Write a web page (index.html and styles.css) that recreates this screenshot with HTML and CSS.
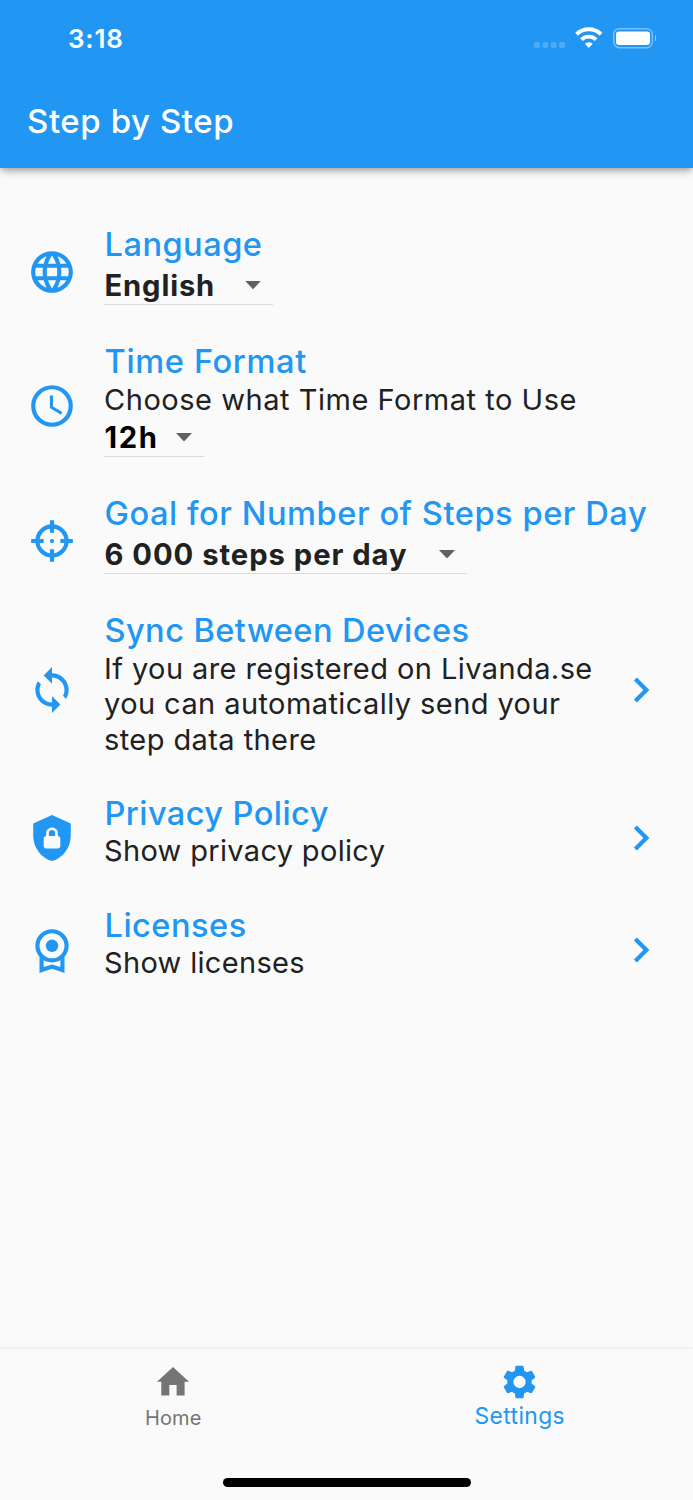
FILE: index.html
```html
<!DOCTYPE html>
<html lang="en">
<head>
<meta charset="utf-8">
<title>Step by Step</title>
<link rel="stylesheet" href="styles.css">
</head>
<body>
<div class="screen">
  <header class="header">
    <div class="status">
      <span class="time">3:18</span>
      <svg class="status-icons" viewBox="0 0 126 24">
        <g fill="#fff" opacity=".2">
          <rect x="4" y="16" width="6" height="6" rx="1.8"/><rect x="12.400" y="16" width="6" height="6" rx="1.8"/><rect x="20.700" y="16" width="6" height="6" rx="1.8"/><rect x="29" y="16" width="6" height="6" rx="1.8"/>
        </g>
        <g fill="none" stroke="#fff">
          <path d="M46.600 8.300a17.500 17.500 0 0 1 24.400 0" stroke-width="4"/>
          <path d="M51.500 13.600a10.600 10.600 0 0 1 14.600 0" stroke-width="3.800"/>
        </g>
        <path d="M58.800 22.100l-3.900-4.300a5.600 5.600 0 0 1 7.800 0z" fill="#fff"/>
        <rect x="83.700" y="2.700" width="38.600" height="19" rx="5.600" fill="none" stroke="#fff" stroke-opacity=".4" stroke-width="1.500"/>
        <rect x="86" y="5.400" width="34" height="13.700" rx="3" fill="#fff"/>
        <path d="M125 9.100c2.400 1 2.400 5.200 0 6.200z" fill="#fff" opacity=".5"/>
      </svg>
    </div>
    <h1 class="app-title">Step by Step</h1>
  </header>

  <main class="list">
    <section class="row">
      <svg class="icon" viewBox="0 0 24 24"><path d="M11.990 2C6.470 2 2 6.480 2 12s4.470 10 9.990 10C17.520 22 22 17.520 22 12S17.520 2 11.990 2zm6.930 6h-2.950c-.32-1.250-.78-2.450-1.380-3.560 1.840.63 3.370 1.910 4.330 3.560zM12 4.040c.83 1.200 1.480 2.530 1.910 3.960h-3.820c.43-1.430 1.080-2.760 1.910-3.960zM4.260 14C4.100 13.360 4 12.690 4 12s.1-1.360.26-2h3.380c-.08.66-.14 1.320-.14 2s.06 1.340.14 2H4.260zm.82 2h2.950c.32 1.250.78 2.450 1.380 3.560-1.840-.63-3.370-1.900-4.330-3.560zm2.950-8H5.080c.96-1.660 2.490-2.930 4.330-3.560C8.810 5.550 8.350 6.750 8.030 8zM12 19.960c-.83-1.200-1.480-2.530-1.910-3.960h3.820c-.43 1.430-1.080 2.760-1.910 3.960zM14.340 14H9.660c-.09-.66-.16-1.320-.16-2s.07-1.350.16-2h4.680c.09.65.16 1.320.16 2s-.07 1.340-.16 2zm.25 5.560c.6-1.110 1.060-2.310 1.380-3.560h2.950c-.96 1.650-2.490 2.930-4.330 3.560zM16.360 14c.08-.66.14-1.320.14-2s-.06-1.340-.14-2h3.380c.16.64.26 1.310.26 2s-.1 1.360-.26 2h-3.380z"/></svg>
      <div class="content">
        <h2 class="label">Language</h2>
        <div class="select select-language"><span>English</span><i class="caret"></i></div>
      </div>
    </section>

    <section class="row">
      <svg class="icon" viewBox="0 0 24 24"><circle cx="12" cy="12" r="9" fill="none" stroke="currentColor" stroke-width="2"/><path d="M12.500 7v5.250l4.500 2.670-.75 1.230L11 13V7h1.500z"/></svg>
      <div class="content">
        <h2 class="label time-format">Time Format</h2>
        <p class="text choose">Choose what Time Format to Use</p>
        <div class="select select-time"><span>12h</span><i class="caret"></i></div>
      </div>
    </section>

    <section class="row">
      <svg class="icon" viewBox="0 0 24 24"><g fill="none" stroke="currentColor" stroke-width="2"><circle cx="12" cy="12" r="7"/><path d="M12 2v6M12 16v6M2 12h6M16 12h6"/></g><circle cx="12" cy="12" r="1"/></svg>
      <div class="content">
        <h2 class="label goal">Goal for Number of Steps per Day</h2>
        <div class="select select-goal"><span>6 000 steps per day</span><i class="caret"></i></div>
      </div>
    </section>

    <section class="row">
      <svg class="icon" viewBox="0 0 24 24"><path d="M12 4V1L8 5l4 4V6c3.310 0 6 2.690 6 6 0 1.010-.25 1.970-.7 2.800l1.460 1.460C19.540 15.030 20 13.570 20 12c0-4.420-3.580-8-8-8zm0 14c-3.310 0-6-2.690-6-6 0-1.010.25-1.970.7-2.800L5.240 7.740C4.460 8.970 4 10.430 4 12c0 4.420 3.580 8 8 8v3l4-4-4-4v3z"/></svg>
      <div class="content">
        <h2 class="label sync">Sync Between Devices</h2>
        <p class="text registered">If you are registered on Livanda.se<br>you can automatically send your<br>step data there</p>
      </div>
      <svg class="icon" viewBox="0 0 24 24"><path d="M10 6L8.590 7.410 13.170 12l-4.580 4.590L10 18l6-6z"/></svg>
    </section>

    <section class="row">
      <svg class="icon" viewBox="0 0 24 24"><path d="M12 1L3 5v6c0 5.550 3.840 10.740 9 12 5.160-1.260 9-6.450 9-12V5zM12 7c1.400 0 2.800 1.100 2.800 2.500V11c.6 0 1.200.6 1.200 1.300v3.500c0 .6-.6 1.200-1.300 1.200H9.200C8.600 17 8 16.400 8 15.700v-3.500c0-.6.6-1.200 1.200-1.200V9.500C9.200 8.100 10.600 7 12 7m0 1.200c-.8 0-1.500.5-1.500 1.300V11h3V9.500c0-.8-.7-1.300-1.500-1.300z" fill-rule="evenodd"/></svg>
      <div class="content">
        <h2 class="label privacy">Privacy Policy</h2>
        <p class="text">Show privacy policy</p>
      </div>
      <svg class="icon" viewBox="0 0 24 24"><path d="M10 6L8.590 7.410 13.170 12l-4.580 4.590L10 18l6-6z"/></svg>
    </section>

    <section class="row">
      <svg class="icon" viewBox="0 0 24 24"><circle cx="12" cy="10" r="7" fill="none" stroke="currentColor" stroke-width="2"/><circle cx="12" cy="10" r="3"/><path d="M6 15v8l6-2 6 2v-8l-2 1.900v3.300L12 19l-4 1.200v-3.300z"/></svg>
      <div class="content">
        <h2 class="label">Licenses</h2>
        <p class="text">Show licenses</p>
      </div>
      <svg class="icon" viewBox="0 0 24 24"><path d="M10 6L8.590 7.410 13.170 12l-4.580 4.590L10 18l6-6z"/></svg>
    </section>
  </main>

  <nav class="tabs">
    <div class="tab-list">
      <a class="tab">
        <svg class="tab-icon" viewBox="0 0 40 40"><path d="M20 5L4 19.800h4.300v13.800h8V23h7.300v10.600h8V19.800H36z"/></svg>
        <span>Home</span>
      </a>
      <a class="tab active">
        <svg class="tab-icon" viewBox="0 0 24 24"><path fill-rule="evenodd" d="M19.430 12.980c.04-.32.07-.64.07-.98s-.03-.66-.07-.98l2.110-1.650c.19-.15.24-.42.12-.64l-2-3.460c-.12-.22-.39-.3-.61-.22l-2.490 1c-.52-.4-1.080-.73-1.690-.98l-.38-2.650C14.460 2.180 14.250 2 14 2h-4c-.25 0-.46.18-.49.42l-.38 2.650c-.61.25-1.170.59-1.690.98l-2.490-1c-.23-.09-.49 0-.61.22l-2 3.460c-.13.22-.07.49.12.64l2.110 1.650c-.04.32-.07.65-.07.98s.03.66.07.98l-2.110 1.650c-.19.15-.24.42-.12.64l2 3.460c.12.22.39.3.61.22l2.490-1c.52.4 1.080.73 1.690.98l.38 2.650c.03.24.24.42.49.42h4c.25 0 .46-.18.49-.42l.38-2.650c.61-.25 1.170-.59 1.690-.98l2.490 1c.23.09.49 0 .61-.22l2-3.460c.12-.22.07-.49-.12-.64l-2.110-1.650zM12 15.800a3.800 3.800 0 1 1 0-7.600 3.800 3.800 0 0 1 0 7.600z"/></svg>
        <span>Settings</span>
      </a>
    </div>
    <div class="home-indicator"></div>
  </nav>
</div>
</body>
</html>
```
FILE: styles.css
```css
* { box-sizing: border-box; }
body { margin: 0; font-family: Inter, "Liberation Sans", sans-serif; background: #fafafa; color: #212121; }
h1, h2, p { margin: 0; font-weight: 400; }
svg { display: block; fill: currentColor; flex: none; }

.screen { width: 693px; height: 1500px; display: flex; flex-direction: column; overflow: hidden; }

.header { height: 167.500px; flex: none; background: #2196f3; color: #fff; box-shadow: 0 4px 8px -1px rgba(0,0,0,.32), 0 1px 4px rgba(0,0,0,.1); }
.status { height: 76px; display: flex; align-items: center; justify-content: space-between; padding: 0 37px 0 68px; }
.time { font-size: 26px; font-weight: 600; letter-spacing: .8px; }
.status-icons { width: 126px; height: 24px; }
.app-title { padding-left: 27px; font-size: 33px; font-weight: 500; line-height: 90px; letter-spacing: .57px; }

.list { flex: 1; padding-top: 45.700px; }
.row { display: flex; align-items: center; padding: 0 27px; }
.icon { width: 50px; height: 50px; color: #2196f3; }
.content { flex: 1; margin-left: 27px; padding: 12px 0 24.900px; white-space: nowrap; min-width: 0; }
.label { padding-left: .5px; color: #2196f3; font-size: 32.600px; font-weight: 450; line-height: 39.800px; letter-spacing: .48px; }
.time-format { letter-spacing: .63px; }
.goal { letter-spacing: .56px; }
.sync { letter-spacing: .42px; }
.privacy { letter-spacing: .42px; }
.text { font-size: 29px; line-height: 35.300px; letter-spacing: .33px; }
.choose { letter-spacing: .53px; }
.registered { letter-spacing: .42px; }

.select { display: flex; align-items: center; justify-content: space-between; height: 40.200px; padding: 1px 12px 0 .5px; border-bottom: 1.500px solid #dcdcdc; font-size: 29.200px; font-weight: 680; }
.select-language { width: 169px; letter-spacing: .85px; }
.select-time { width: 100px; letter-spacing: 1.600px; color: #000; }
.select-goal { width: 363px; letter-spacing: .97px; }
.caret { width: 16px; height: 8.500px; background: #616161; clip-path: polygon(0 0, 100% 0, 50% 100%); }

.tabs { height: 151px; flex: none; display: flex; flex-direction: column; justify-content: space-between; align-items: center; padding: 13px 0 13.500px; box-shadow: 0 -1px 3px rgba(0,0,0,.08); }
.tab-list { width: 100%; display: flex; }
.tab { flex: 1; display: flex; flex-direction: column; align-items: center; color: #757575; font-size: 20px; line-height: 32px; letter-spacing: .1px; }
.tab-icon { width: 40px; height: 40px; }
.active { color: #2196f3; font-size: 22.800px; line-height: 28px; letter-spacing: .4px; }
.active .tab-icon { width: 39px; }
.home-indicator { width: 248px; height: 8.500px; border-radius: 5px; background: #000; }
```
